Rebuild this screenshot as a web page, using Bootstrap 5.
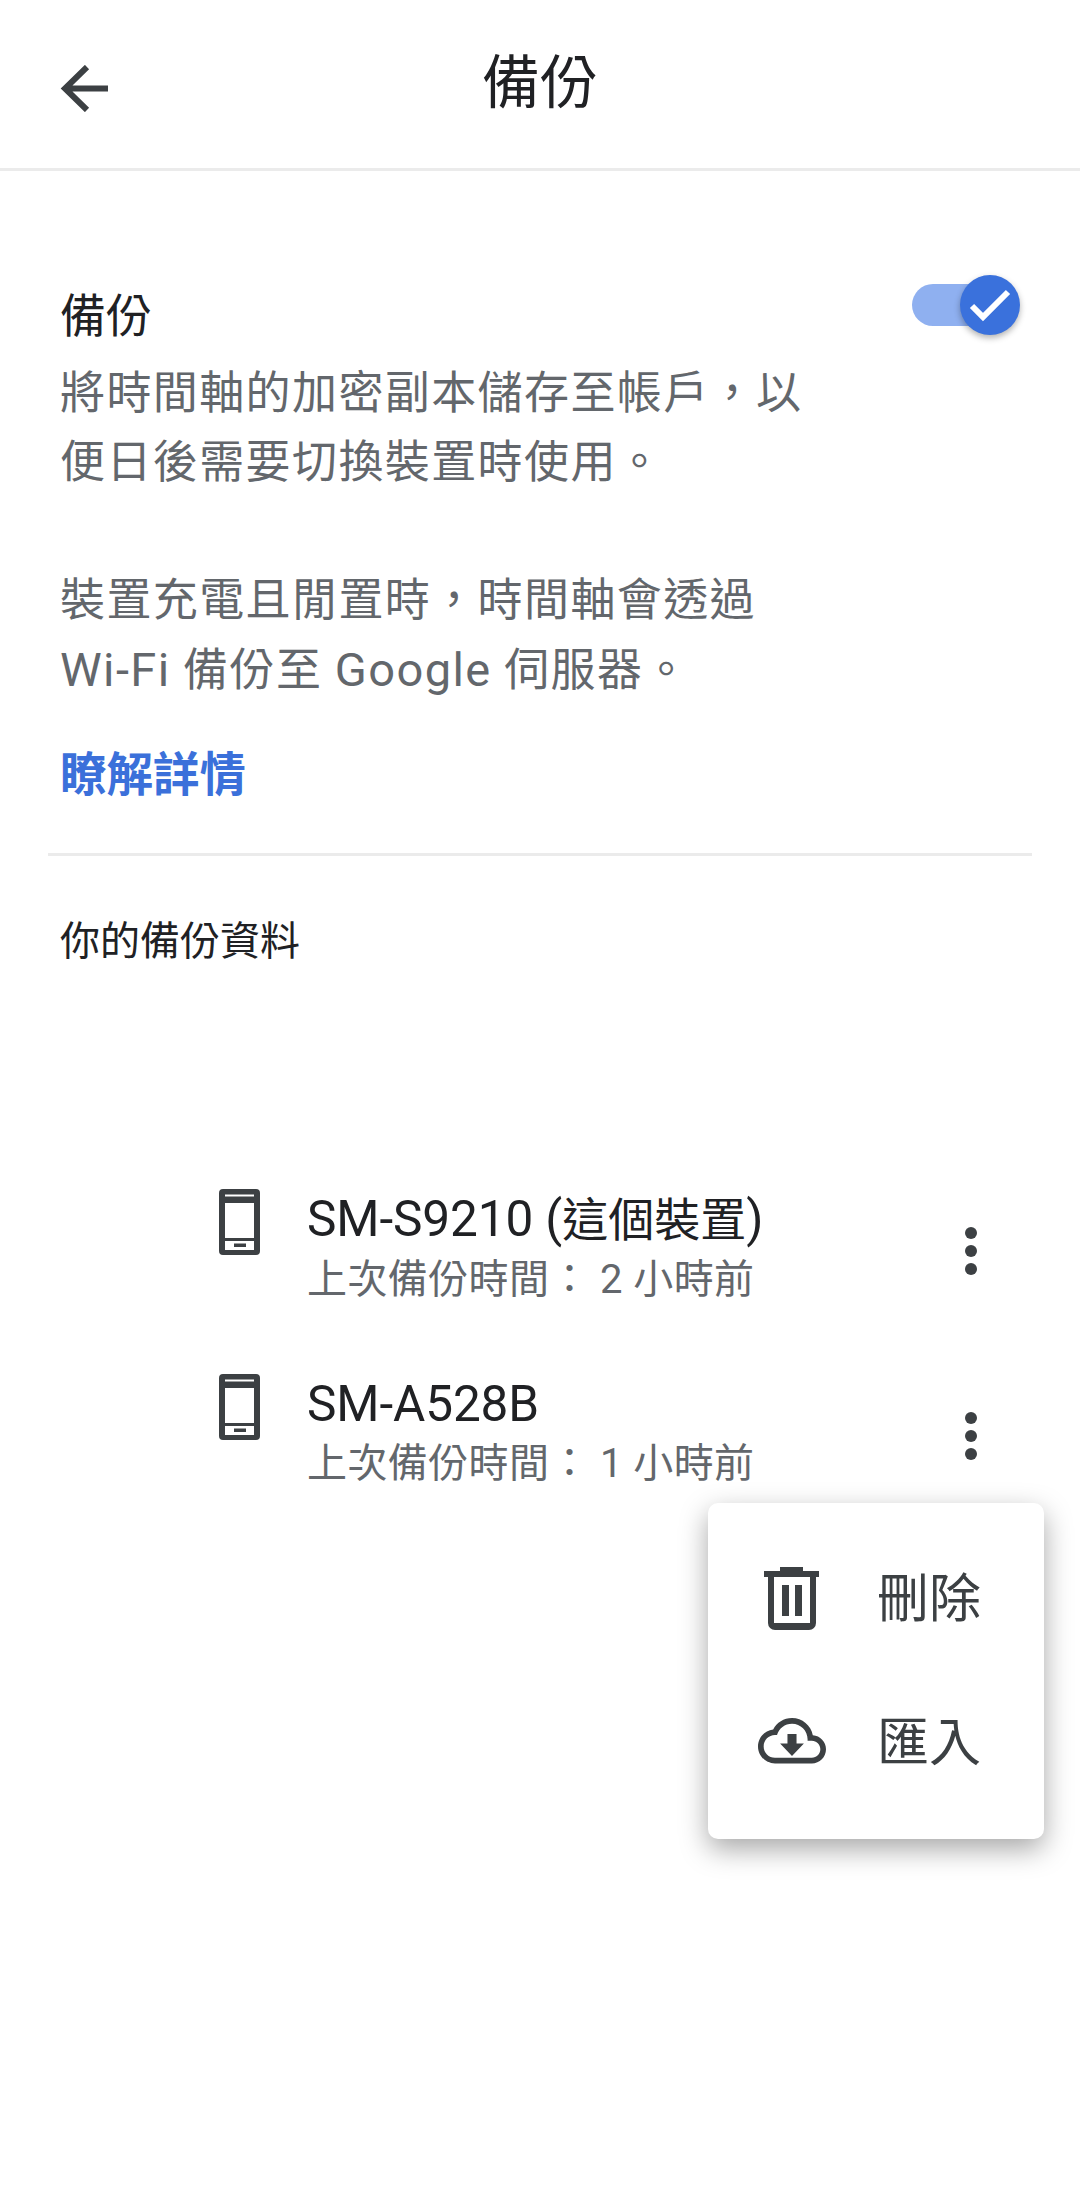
<!DOCTYPE html>
<html lang="zh-Hant">
<head>
    <meta charset="UTF-8">
    <meta name="viewport" content="width=device-width, initial-scale=1.0">
    <title>備份</title>
    <link href="https://cdn.jsdelivr.net/npm/bootstrap@5.3.3/dist/css/bootstrap.min.css" rel="stylesheet">
    <script defer src="https://cdn.jsdelivr.net/npm/bootstrap@5.3.3/dist/js/bootstrap.bundle.min.js"></script>
    <style>
        body {
            background: #fff;
            color: #202124;
            font-family: Roboto, "Noto Sans CJK TC", sans-serif;
            height: 2207px;
            overflow: hidden;
            position: relative;
        }
        .top-bar {
            height: 171px;
            border-bottom: 3px solid #ebebeb;
            padding-left: 60px;
            position: relative;
        }
        .top-title {
            position: absolute;
            left: 0;
            right: 0;
            top: 48px;
            margin: 0;
            text-align: center;
            font-size: 58px;
            line-height: 70px;
            font-weight: 400;
        }
        .back-icon { width: 48px; height: 47px; margin-top: 8px; }
        .backup-block { padding: 107px 60px 0; height: 682px; }
        .backup-title { font-size: 46px; line-height: 76px; }
        .backup-text {
            font-size: 45px;
            line-height: 69px;
            color: #63676c;
            letter-spacing: 1.4px;
            margin-top: 5px;
        }
        .backup-text + .backup-text { margin-top: 69px; }
        .latin-run { font-size: 47px; }
        .learn-link {
            color: #3b70da;
            font-size: 46.500px;
            line-height: 69px;
            font-weight: 700;
            text-decoration: none;
            margin-top: 36px;
        }
        .toggle-wrap { position: relative; width: 110px; height: 60px; margin-top: -7px; }
        .toggle-track {
            position: absolute; left: 2px; top: 13px;
            width: 90px; height: 42px;
            border-radius: 21px;
            background: #8fb0f0;
        }
        .toggle-knob {
            position: absolute; right: 0; top: 4px;
            width: 60px; height: 60px;
            border-radius: 50%;
            background: #3a71dc;
            box-shadow: 0 3px 6px rgba(0,0,0,.3);
        }
        .section-rule { margin: 0 48px; height: 3px; background: #ebebeb; }
        .section-label { font-size: 40px; line-height: 50px; padding: 61px 60px 0; }
        .device-list { padding: 0 0 0 219px; margin-top: 222px; }
        .device-row { height: 185px; position: relative; }
        .device-icon { width: 41px; height: 66px; flex: none; margin-right: 47px; }
        .device-name { font-size: 49.500px; line-height: 60px; letter-spacing: -.1px; }
        .cjk-run { font-size: 46px; letter-spacing: 0; }
        .device-time { font-size: 40px; line-height: 60px; color: #63676c; letter-spacing: .4px; }
        .kebab {
            position: absolute; left: 742px; top: 36px;
            width: 20px; height: 52px;
        }
        .popup-menu {
            position: absolute; left: 708px; top: 1503px;
            width: 336px; height: 336px;
            background: #fff;
            border-radius: 10px;
            box-shadow: 0 10px 28px rgba(0,0,0,.35);
        }
        .popup-item { height: 145px; position: relative; font-size: 52px; color: #3c4043; }
        .popup-item svg { position: absolute; }
        .popup-item span { position: absolute; left: 169px; line-height: 70px; }
    </style>
</head>
<body>
    <div class="top-bar d-flex align-items-center">
        <svg class="back-icon" viewBox="0 0 48 47"><path d="M48 23.500H6M27 2 5 23.500 27 45" fill="none" stroke="#3c4043" stroke-width="6"/></svg>
        <h1 class="top-title">備份</h1>
    </div>

    <div class="backup-block d-flex justify-content-between align-items-start">
        <div>
            <div class="backup-title">備份</div>
            <div class="backup-text">將時間軸的加密副本儲存至帳戶，以<br>便日後需要切換裝置時使用。</div>
            <div class="backup-text">裝置充電且閒置時，時間軸會透過<br><span class="latin-run">Wi-Fi</span> 備份至 <span class="latin-run">Google</span> 伺服器。</div>
            <a class="learn-link d-block" href="#">瞭解詳情</a>
        </div>
        <div class="toggle-wrap">
            <div class="toggle-track"></div>
            <div class="toggle-knob d-flex align-items-center justify-content-center">
                <svg width="42" height="36" viewBox="0 0 42 36"><path d="M3 19l11 11L39 5" fill="none" stroke="#fff" stroke-width="6"/></svg>
            </div>
        </div>
    </div>

    <div class="section-rule"></div>
    <div class="section-label">你的備份資料</div>

    <div class="device-list">
        <div class="device-row d-flex">
            <svg class="device-icon" viewBox="0 0 41 66"><path fill-rule="evenodd" d="M4 0h33a4 4 0 0 1 4 4v58a4 4 0 0 1-4 4H4a4 4 0 0 1-4-4V4a4 4 0 0 1 4-4zM6 5.500v2h29v-2zM6 14v35h29V14zM6 52v9h29v-9zM15 54.500h12V58H15z" fill="#3c4043"/></svg>
            <div>
                <div class="device-name">SM-S9210 (<span class="cjk-run">這個裝置</span>)</div>
                <div class="device-time">上次備份時間： 2 小時前</div>
            </div>
            <svg class="kebab" viewBox="0 0 20 52"><circle cx="10" cy="8" r="6" fill="#3c4043"/><circle cx="10" cy="26" r="6" fill="#3c4043"/><circle cx="10" cy="44" r="6" fill="#3c4043"/></svg>
        </div>
        <div class="device-row d-flex">
            <svg class="device-icon" viewBox="0 0 41 66"><path fill-rule="evenodd" d="M4 0h33a4 4 0 0 1 4 4v58a4 4 0 0 1-4 4H4a4 4 0 0 1-4-4V4a4 4 0 0 1 4-4zM6 5.500v2h29v-2zM6 14v35h29V14zM6 52v9h29v-9zM15 54.500h12V58H15z" fill="#3c4043"/></svg>
            <div>
                <div class="device-name">SM-A528B</div>
                <div class="device-time">上次備份時間： 1 小時前</div>
            </div>
            <svg class="kebab" viewBox="0 0 20 52"><circle cx="10" cy="8" r="6" fill="#3c4043"/><circle cx="10" cy="26" r="6" fill="#3c4043"/><circle cx="10" cy="44" r="6" fill="#3c4043"/></svg>
        </div>
    </div>

    <div class="popup-menu">
        <div class="popup-item">
            <svg style="left:56px;top:64px" width="55" height="63" viewBox="0 0 55 63"><path fill-rule="evenodd" d="M16 0h23v4h16v6H0V4h16zM4 10h48v46a7 7 0 0 1-7 7H11a7 7 0 0 1-7-7zM10 10v46h36V10zM18 18h7v31h-7zM31 18h7v31h-7z" fill="#3c4043"/></svg>
            <span style="top:62px">刪除</span>
        </div>
        <div class="popup-item">
            <svg style="left:50px;top:70px" width="68" height="48" viewBox="0 4 24 16.900"><path d="M19.350 10.040C18.670 6.590 15.640 4 12 4 9.110 4 6.600 5.640 5.350 8.040 2.340 8.360 0 10.910 0 14c0 3.310 2.690 6 6 6h13c2.760 0 5-2.240 5-5 0-2.640-2.050-4.780-4.650-4.960zM19 18H6c-2.210 0-4-1.790-4-4s1.790-4 4-4h.710C7.370 7.690 9.480 6 12 6c3.040 0 5.500 2.460 5.500 5.500v.5H19c1.660 0 3 1.340 3 3s-1.340 3-3 3z" fill="#3c4043"/><path d="M10.400 9.600h3.200V13h2.600L12 17.400 7.800 13h2.600z" fill="#3c4043"/></svg>
            <span style="top:61px">匯入</span>
        </div>
    </div>
</body>
</html>
